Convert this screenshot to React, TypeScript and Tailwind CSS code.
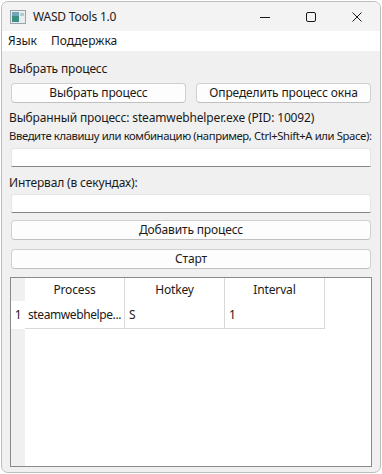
import React from 'react';

function AppIcon() {
  return (
    <svg width="16" height="14" viewBox="0 0 16 14">
      <rect x="0.5" y="0.5" width="15" height="13" fill="#e8eef0" stroke="#9aa4a8" />
      <rect x="2" y="2" width="7" height="10" fill="#3d8f86" />
      <rect x="2" y="2" width="7" height="4" fill="#6fa6b8" />
      <rect x="10" y="3" width="4" height="3" fill="#b8c8cc" />
    </svg>
  );
}

function WinButton({ children }: { children: React.ReactNode }) {
  return (
    <button className="h-[20px] rounded-[4px] border border-[#d0d0d0] border-b-[#c0c0c0] bg-[#fdfdfd] text-[12px] text-[#1a1a1a]">
      {children}
    </button>
  );
}

function TextInput() {
  return <div className="mx-[2px] h-[19px] rounded-t-[3px] border border-[#e5e5e5] border-b-[#868686] bg-white" />;
}

export default function App() {
  return (
    <div
      className="flex h-[474px] w-[382px] flex-col bg-white"
      style={{ fontFamily: '"Segoe UI", "Noto Sans", "Liberation Sans", sans-serif' }}
    >
      <div className="m-[1px] flex h-[472px] flex-col overflow-hidden rounded-[7px] border border-[#bdbdbd] bg-[#f0f0f0]">
        {/* title bar */}
        <div className="flex h-[29px] items-center bg-[#f3f3f3]">
          <div className="ml-[8px] flex items-center">
            <AppIcon />
          </div>
          <span className="ml-[7px] text-[12px] tracking-[-0.2px] text-[#1a1a1a]">WASD Tools 1.0</span>
          <div className="ml-auto flex h-full items-center">
            <div className="flex h-full w-[46px] items-center justify-center">
              <svg width="10" height="10" viewBox="0 0 10 10">
                <path d="M0 5.5h10" stroke="#1a1a1a" strokeWidth="1" />
              </svg>
            </div>
            <div className="flex h-full w-[46px] items-center justify-center">
              <svg width="10" height="10" viewBox="0 0 10 10">
                <rect x="0.5" y="0.5" width="9" height="9" rx="1.5" fill="none" stroke="#1a1a1a" strokeWidth="1" />
              </svg>
            </div>
            <div className="flex h-full w-[46px] items-center justify-center">
              <svg width="10" height="10" viewBox="0 0 10 10">
                <path d="M0.5 0.5l9 9M9.5 0.5l-9 9" stroke="#1a1a1a" strokeWidth="1" />
              </svg>
            </div>
          </div>
        </div>

        {/* menu bar */}
        <div className="flex h-[20px] items-center gap-[14px] bg-white px-[6px] text-[12px] text-[#1a1a1a]">
          <span>Язык</span>
          <span>Поддержка</span>
        </div>

        {/* content */}
        <div className="flex flex-1 flex-col px-[7px] pt-[9px] text-[12px] tracking-[-0.15px] text-[#1a1a1a]">
          <div className="h-[17px] leading-[17px]">Выбрать процесс</div>
          <div className="mt-[6px] grid grid-cols-2 gap-[10px] px-[2px]">
            <WinButton>Выбрать процесс</WinButton>
            <WinButton>Определить процесс окна</WinButton>
          </div>
          <div className="mt-[6px] h-[17px] leading-[17px]">Выбранный процесс: steamwebhelper.exe (PID: 10092)</div>
          <div className="mt-[1px] h-[17px] whitespace-nowrap text-[11.3px] leading-[17px] tracking-[-0.4px]">
            Введите клавишу или комбинацию (например, Ctrl+Shift+A или Space):
          </div>
          <div className="mt-[4px]">
            <TextInput />
          </div>
          <div className="mt-[7px] h-[17px] leading-[17px]">Интервал (в секундах):</div>
          <div className="mt-[3px]">
            <TextInput />
          </div>
          <div className="mt-[7px] flex flex-col gap-[9px] px-[2px]">
            <WinButton>Добавить процесс</WinButton>
            <WinButton>Старт</WinButton>
          </div>

          {/* table */}
          <div className="mx-[1px] mt-[8px] mb-[5px] flex flex-1 border border-[#8a8a8a] bg-white">
            <div className="flex w-[14px] flex-col bg-[#f0f0f0]">
              <div className="h-[23px]" />
              <div className="flex h-[28px] items-center justify-center bg-white">1</div>
            </div>
            <div className="flex flex-col">
              <div className="flex h-[23px]">
                <div className="flex w-[100px] items-center justify-center border-r border-[#d8d8d8]">Process</div>
                <div className="flex w-[100px] items-center justify-center border-r border-[#d8d8d8]">Hotkey</div>
                <div className="flex w-[100px] items-center justify-center border-r border-[#d8d8d8]">Interval</div>
              </div>
              <div className="flex h-[28px] border-b border-[#d8d8d8]">
                <div className="flex w-[100px] items-center whitespace-nowrap border-r border-[#d8d8d8] pl-[3px] tracking-[-0.4px]">
                  steamwebhelpe...
                </div>
                <div className="flex w-[100px] items-center border-r border-[#d8d8d8] pl-[4px]">S</div>
                <div className="flex w-[100px] items-center border-r border-[#d8d8d8] pl-[4px]">1</div>
              </div>
            </div>
          </div>
        </div>
      </div>
    </div>
  );
}
